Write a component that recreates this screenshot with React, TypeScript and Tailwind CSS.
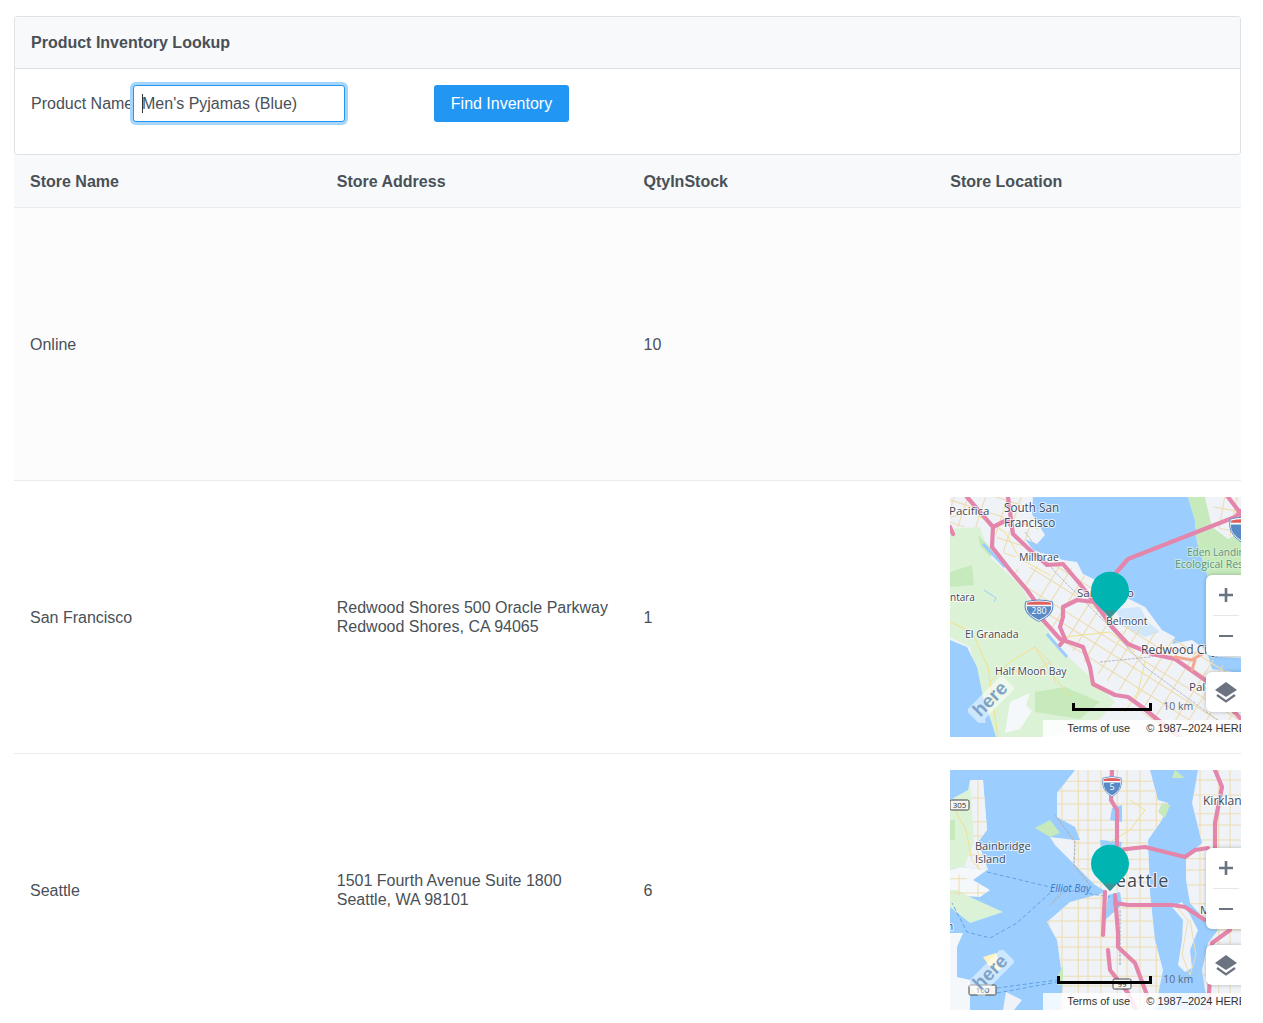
import React from 'react';

const WATER = '#9bceff';
const LAND = '#eff3f7';
const GREEN = '#dcf2d6';
const GREEN2 = '#c6eabc';
const TAN = '#eddcb2';
const YELLOW = '#f4e08a';
const PINK = '#e486ab';

function Label({ x, y, size = 11.5, fill = '#3f4856', italic = false, halo = '#ffffff', spacing = 0, children }: { x: number; y: number; size?: number; fill?: string; italic?: boolean; halo?: string; spacing?: number; children: React.ReactNode }) {
  return (
    <text x={x} y={y} fontSize={size} letterSpacing={spacing} fill={fill} fontStyle={italic ? 'italic' : 'normal'} stroke={halo} strokeWidth={2} strokeOpacity={0.7} paintOrder="stroke" className="font-['Open_Sans',sans-serif]">
      {children}
    </text>
  );
}

function Lines({ d, color, width }: { d: string[]; color: string; width: number }) {
  return (
    <g fill="none" stroke={color} strokeWidth={width} strokeLinejoin="round" strokeLinecap="round">
      {d.map((p) => (
        <path key={p} d={p} />
      ))}
    </g>
  );
}

// street grid, clipped to a land outline
function Grid({ id, area, step, angle = 0 }: { id: string; area: string; step: number; angle?: number }) {
  const lines: string[] = [];
  for (let i = 0; i * step < 700; i++) {
    const p = -200 + i * step + (i % 3 === 1 ? step * 0.25 : 0);
    lines.push(`M${p},-200 L${p},500`);
    lines.push(`M-200,${p} L600,${p}`);
  }
  return (
    <g clipPath={`url(#${id})`}>
      <clipPath id={id}>
        <path d={area} />
      </clipPath>
      <g transform={`rotate(${angle} 150 120)`} fill="none" stroke={TAN} strokeWidth="1.1">
        {lines.map((p) => (
          <path key={p} d={p} />
        ))}
      </g>
    </g>
  );
}

function Shield({ x, y, label, sx = 1, sy = 1 }: { x: number; y: number; label: string; sx?: number; sy?: number }) {
  return (
    <g transform={`translate(${x} ${y})`}>
      <g transform={`scale(${sx} ${sy})`}>
        <path d="M-9,-9 Q0,-12 9,-9 Q12,2 0,10 Q-12,2 -9,-9Z" fill="#ffffff" stroke="#5a8ac6" strokeWidth="0.8" />
        <path d="M-8,-8 Q0,-10 8,-8 L8.5,-6 L-8.5,-6Z" fill="#e0605e" />
        <path d="M-8.5,-4.5 L8.5,-4.5 Q9,3 0,8.5 Q-9,3 -8.5,-4.5Z" fill="#5a8ac6" />
      </g>
      <text y="3" textAnchor="middle" fontSize="9" fill="#ffffff" className="font-['Open_Sans',sans-serif]">{label}</text>
    </g>
  );
}

function RoadSign({ x, y, w, label }: { x: number; y: number; w: number; label: string }) {
  return (
    <g>
      <rect x={x} y={y} width={w} height={10} rx={1.5} fill="#f5f5f0" stroke="#444444" strokeWidth="1" />
      <text x={x + w / 2} y={y + 8} textAnchor="middle" fontSize="8" fill="#333333" className="font-['Open_Sans',sans-serif]">{label}</text>
    </g>
  );
}

function MapOverlay({ barX }: { barX: number }) {
  return (
    <>
      {/* here logo */}
      <svg className="absolute left-[18px] top-[180px]" width="46" height="46" viewBox="0 0 46 46">
        <g transform="rotate(-45 23 23)">
          <rect x="-2" y="13" width="50" height="19" rx="3" fill="#ffffff" fillOpacity="0.5" />
          <path d="M-2,32 L6,32 L-2,40Z" fill="#ffffff" fillOpacity="0.5" />
          <text x="23" y="28" textAnchor="middle" fontSize="19" fontWeight="700" fill="#7fa3c7" className="font-['Liberation_Sans',sans-serif]">here</text>
        </g>
      </svg>
      {/* scale */}
      <div className="absolute top-[206px] h-[8px] border-x-[3px] border-b-[3px] border-black" style={{ left: barX, width: 202 - barX }} />
      <span className="absolute left-[213px] top-[202px] text-[10.5px] leading-[14px] text-[#5b6b84] font-['Open_Sans',sans-serif]">10 km</span>
      {/* attribution */}
      <div className="absolute left-[93px] right-0 bottom-0 h-[17px] bg-white/85 flex items-center whitespace-nowrap overflow-hidden text-[11px] text-[#333333]">
        <span className="ml-[24px]">Terms of use</span>
        <span className="ml-[16px]">© 1987–2024 HERE</span>
      </div>
      {/* pin */}
      <svg className="absolute left-[140px] top-[74px]" width="40" height="48" viewBox="0 0 40 48">
        <path d="M20,47 L7,33.5 A19,19 0 1 1 33,33.5 Z" fill="#00b5b1" />
        <path d="M13,39.5 L27,39.5 L20,47Z" fill="#3a9397" />
      </svg>
      {/* zoom controls */}
      <div className="absolute left-[256px] top-[78px] w-[40px] h-[81px] bg-white rounded-l-md shadow-[0_0_4px_rgba(0,0,0,0.25)] flex flex-col items-center">
        <div className="h-[40px] flex items-center justify-center">
          <svg width="16" height="16" viewBox="0 0 16 16"><path d="M8,1V15M1,8H15" stroke="#6b7280" strokeWidth="2.6" /></svg>
        </div>
        <div className="w-[26px] h-px bg-[#e5e7eb]" />
        <div className="h-[40px] flex items-center justify-center">
          <svg width="16" height="16" viewBox="0 0 16 16"><path d="M1,8H15" stroke="#6b7280" strokeWidth="2" /></svg>
        </div>
      </div>
      {/* layers */}
      <div className="absolute left-[256px] top-[175px] w-[40px] h-[40px] bg-white rounded-l-md shadow-[0_0_4px_rgba(0,0,0,0.25)] flex items-center justify-center">
        <svg width="24" height="24" viewBox="0 0 24 24">
          <path d="M12,2 L23,10 L12,17 L1,10Z" fill="#6b7280" />
          <path d="M3,15 L12,21.5 L21,15" fill="none" stroke="#6b7280" strokeWidth="2.2" />
        </svg>
      </div>
    </>
  );
}

function SanFranciscoMap() {
  return (
    <div className="relative w-full h-[240px] overflow-hidden bg-[#eff3f7]">
      <svg className="absolute inset-0" width="291" height="240" viewBox="0 0 291 240">
        <rect width="291" height="240" fill={LAND} />
        <path d="M0,32 L30,30 L40,60 L70,88 L88,118 L108,150 L140,180 L165,205 L150,222 L95,240 L45,240 L30,190 L20,150 L0,140Z" fill={GREEN} />
        <path d="M0,75 L22,68 L24,88 L0,90Z M28,38 L45,55 L40,60 L30,48Z M85,195 L115,190 L150,205 L130,222 L85,215Z" fill={GREEN2} />
        <path d="M60,205 L80,196 L76,208 L82,214 L70,232 L55,236Z" fill="#f5f8fb" />
        <path d="M0,143 L17,150 L27,170 L33,200 L43,230 L46,240 L0,240Z" fill={WATER} />
        <path d="M83,0 L82,17 L95,38 L87,47 L75,42 L83,53 L113,63 L127,65 L133,77 L150,85 L175,100 L195,110 L212,133 L225,140 L222,147 L242,143 L256,153 L268,160 L291,161 L291,176 L262,172 L256,150 L258,80 L247,45 L245,23 L238,0Z" fill={WATER} />
        <path d="M238,0 L245,23 L247,45 L258,80 L291,80 L291,42 L262,30 L255,0Z" fill={GREEN2} />
        <path d="M255,0 L262,30 L278,42 L291,35 L291,0Z" fill={LAND} />
        <path d="M165,112 L190,110 L198,125 L210,135 L195,140 L175,130Z" fill="#cfe6fb" />
        <path d="M33,47 L55,70 M97,137 L117,160" fill="none" stroke={WATER} strokeWidth="3" />
        <path d="M34,93 L46,101 L44,105" fill="none" stroke={WATER} strokeWidth="1" />
        <Grid id="sf-east" step={15} angle={32} area="M60,73 L113,66 L150,88 L175,115 L212,137 L256,158 L291,180 L291,240 L215,240 L178,200 L140,170 L110,142 L87,107Z" />
        <Grid id="sf-north" step={17} angle={18} area="M0,0 L81,0 L80,17 L92,38 L75,44 L60,70 L42,30 L0,30Z" />
        <Grid id="sf-bay" step={16} angle={10} area="M262,0 L265,28 L280,40 L291,35 L291,0Z" />
        <Lines
          color={TAN}
          width={1}
          d={['M85,150 L100,165 L105,185 M100,165 L75,180 L60,170', 'M20,0 L30,20 M0,20 L30,15']}
        />
        <Lines
          color={YELLOW}
          width={1}
          d={['M0,125 L22,135 L38,170 L40,185 L60,165 L85,150 L100,175 L120,200', 'M40,185 L48,240', 'M195,165 L188,195 L175,215', 'M115,140 L160,135 L185,155', 'M30,20 L55,35 L70,62 L100,78']}
        />
        <path d="M75,35 L105,75 L155,125 L195,170 L291,240 M150,165 L200,160 L240,150" fill="none" stroke="#b9bcc0" strokeWidth="1" strokeDasharray="3 1" />
        <Lines
          color={PINK}
          width={4.2}
          d={[
            'M17,0 L43,30 L42,50 L60,73 L77,93 L87,107 L93,123 L110,142 L133,150 L140,170 L143,187 L153,192 L165,198 L178,200 L192,210 L208,223 L232,242',
            'M43,30 L57,23 L62,30 L63,37 L82,55 L97,68 L113,67 L130,87 L150,113 L162,130 L178,147 L202,157 L225,162 L255,183 L291,222',
            'M165,77 L178,62 L285,20 L291,14 M278,0 L288,13 L291,20',
            'M145,105 L127,103 L113,110 L113,120 L110,130 L115,142 L110,148',
            'M0,30 L3,37',
            'M58,0 L62,30',
          ]}
        />
        <Lines color="#f3a98f" width={3} d={['M225,160 L242,163 L252,157', 'M245,163 L242,173']} />
        <Shield x={89} y={114} label="280" sx={1.45} sy={1.05} />
        <Shield x={291} y={33} label="" sx={1.2} sy={1.2} />
        <Label x={-1} y={18}>Pacifica</Label>
        <Label x={54} y={15} size={11.7}>South San</Label>
        <Label x={54} y={30} size={11.7}>Francisco</Label>
        <Label x={69} y={64} size={10.5}>Millbrae</Label>
        <Label x={0} y={104} size={10}>ntara</Label>
        <Label x={127} y={100} size={11.5}>San Mateo</Label>
        <Label x={156} y={128} size={10.5}>Belmont</Label>
        <Label x={15} y={141} size={10.5}>El Granada</Label>
        <Label x={45} y={178} size={10.5}>Half Moon Bay</Label>
        <Label x={191} y={157} size={12}>Redwood City</Label>
        <Label x={239} y={194}>Palo Alto</Label>
        <Label x={237} y={59} size={10} fill="#5d9280" halo="#d8f0d2">Eden Landing</Label>
        <Label x={225} y={71} size={10.5} fill="#5d9280" halo="#d8f0d2">Ecological Reserve</Label>
      </svg>
      <MapOverlay barX={122} />
    </div>
  );
}

const SEATTLE_LAND =
  'M125,0 L107,23 L107,47 L125,57 L130,70 L123,70 L123,93 L145,115 L157,122 L120,132 L97,152 L107,170 L113,213 L110,240 L205,240 L213,200 L205,170 L200,122 L198,70 L212,50 L218,33 L208,30 L200,0Z';
const SEATTLE_EAST = 'M248,0 L245,17 L242,33 L252,73 L236,87 L236,110 L240,133 L255,150 L268,160 L258,173 L252,200 L255,220 L262,240 L291,240 L291,0Z';
const MERCER = 'M222,137 L232,132 L240,145 L248,160 L240,180 L242,198 L235,202 L228,195 L232,170 L233,150Z';

function SeattleMap() {
  return (
    <div className="relative w-full h-[240px] overflow-hidden bg-[#9bceff]">
      <svg className="absolute inset-0" width="291" height="240" viewBox="0 0 291 240">
        <rect width="291" height="240" fill={WATER} />
        <path d="M0,30 L18,20 L20,10 L33,10 L37,60 L28,72 L38,100 L10,97 L0,100Z" fill={GREEN} />
        <path d="M20,10 L33,10 L37,60 L28,72 L38,100 L14,97 L24,72Z" fill={LAND} />
        <path d="M10,97 L37,100 L23,110 L40,120 L30,127 L0,125 L0,100Z" fill="#f5f8fb" />
        <path d="M7,120 L20,127 L53,142 L20,153 L0,137 L0,120Z" fill={GREEN} />
        <path d="M0,163 L13,163 L7,177 L7,207 L20,210 L20,240 L0,240Z" fill="#f5f8fb" />
        <path d="M56,222 L72,230 L64,240 L53,240Z" fill={LAND} />
        <path d="M33,187 L46,183 L52,198 L44,203Z" fill="#fdf3c0" />
        <path d={SEATTLE_LAND} fill={LAND} />
        <path d="M85,58 L100,50 L110,63 L100,67Z" fill={GREEN2} />
        <path d="M100,67 L125,70 L123,93 L105,75Z" fill={LAND} />
        <path d={SEATTLE_EAST} fill={LAND} />
        <path d={MERCER} fill={LAND} />
        <Grid id="sea-main" step={13} area={SEATTLE_LAND} />
        <Grid id="sea-east" step={15} area={SEATTLE_EAST} />
        <Grid id="sea-kitsap" step={19} area="M20,10 L33,10 L37,60 L28,72 L38,100 L14,97 L24,72Z M0,100 L40,120 L30,127 L0,125Z" />
        <path d="M162,38 L172,35 L172,52 L160,50Z M150,70 L172,72 L170,82 L152,85Z M158,125 L170,122 L172,135 L155,150Z" fill={WATER} />
        <path d="M212,33 L220,35 L215,48 L208,42Z M0,50 L5,50 L5,70 L0,70Z M225,0 L235,8 L222,8Z M108,205 L113,195 L113,215 L107,215Z" fill={GREEN2} />
        <Lines color={TAN} width={1} d={['M225,135 L238,150 L232,185 L240,205 L246,185 L240,150']} />
        <Lines color={YELLOW} width={1} d={['M5,40 L16,60 L22,90 L30,100', 'M180,30 L195,40 L180,60 L160,72', 'M165,125 L165,140']} />
        <path d="M105,45 L125,72 L124,95 L140,115 M170,140 L170,195 M115,120 L100,135" fill="none" stroke="#b0b3b8" strokeWidth="1.2" strokeDasharray="3 1" />
        <path d="M37,102 L100,117 L160,127 M100,123 L67,153 L40,168 L17,162 L2,133 M47,218 L107,210 M47,223 L107,212" fill="none" stroke="#5b9be0" strokeWidth="0.9" strokeDasharray="4 2.5" />
        <Lines
          color={PINK}
          width={4.2}
          d={[
            'M162,0 L161,30 L167,40 L167,80 L160,118',
            'M155,122 L153,165 M165,125 L168,163 L168,177 L185,193 L197,225',
            'M168,80 L195,77 L235,87 L245,80 L258,78',
            'M265,0 L272,17 L265,53 L265,80',
            'M165,133 L178,135 L222,135 L235,137 L255,150',
            'M158,180 L160,200 L178,223 L186,240',
            'M280,160 L262,173 L258,240',
          ]}
        />
        <Shield x={162} y={17} label="5" />
        <RoadSign x={0} y={30} w={19} label="305" />
        <RoadSign x={19} y={215} w={27} label="160" />
        <RoadSign x={163} y={209} w={18} label="99" />
        <Label x={25} y={80} size={11}>Bainbridge</Label>
        <Label x={25} y={93} size={11}>Island</Label>
        <Label x={253} y={35} size={12}>Kirkland</Label>
        <Label x={155} y={117} size={18} spacing={1}>Seattle</Label>
        <Label x={100} y={122} size={10} fill="#3f75c0" italic halo={WATER}>Elliot Bay</Label>
        <Label x={-3} y={160} size={10}>n</Label>
        <Label x={250} y={144}>Medina</Label>
      </svg>
      <MapOverlay barX={107} />
    </div>
  );
}

const rows = [
  { name: 'Online', address: null, qty: 10, map: null },
  { name: 'San Francisco', address: ['Redwood Shores 500 Oracle Parkway', 'Redwood Shores, CA 94065'], qty: 1, map: <SanFranciscoMap /> },
  { name: 'Seattle', address: ['1501 Fourth Avenue Suite 1800', 'Seattle, WA 98101'], qty: 6, map: <SeattleMap /> },
];

export default function App() {
  return (
    <div className="bg-white pl-[14px] pr-[22px] pt-4 text-base text-[#495057] font-['Liberation_Sans',sans-serif]">
      <div className="border border-[#dee2e6] rounded-[3px] overflow-hidden">
        <div className="h-[52px] bg-[#f8f9fa] border-b border-[#dee2e6] px-4 flex items-center font-bold">
          Product Inventory Lookup
        </div>
        <form className="p-4 h-[85px] flex items-start" onSubmit={(e) => e.preventDefault()}>
          <label className="w-[102px] h-[37px] flex items-center whitespace-nowrap">Product Name</label>
          <div className="relative">
            <input
              autoFocus
              defaultValue="Men's Pyjamas (Blue)"
              className="block w-[212px] h-[37px] px-2 bg-white border border-[#2196f3] rounded-[3px] outline-none shadow-[0_0_0_3px_#a6d5fa] caret-transparent"
            />
            {/* text caret */}
            <span className="absolute left-[9px] top-[9px] w-px h-[19px] bg-[#333333]" />
          </div>
          <button type="submit" className="ml-[89px] w-[135px] h-[37px] bg-[#2196f3] text-white rounded-[3px]">
            Find Inventory
          </button>
        </form>
      </div>
      <table className="w-full table-fixed border-collapse text-left">
        <thead>
          <tr className="h-[52px] bg-[#f8f9fa] border-b border-[#e9ecef]">
            <th className="px-4 pt-[2px] font-bold">Store Name</th>
            <th className="px-4 pt-[2px] font-bold">Store Address</th>
            <th className="px-4 pt-[2px] font-bold">QtyInStock</th>
            <th className="px-4 pt-[2px] font-bold">Store Location</th>
          </tr>
        </thead>
        <tbody>
          {rows.map((r, i) => (
            <tr key={r.name} className={`h-[273px] border-b border-[#e9ecef] ${i === 0 ? 'bg-[#fcfcfc]' : 'bg-white'}`}>
              <td className="px-4 pt-[2px]">{r.name}</td>
              <td className="px-4 pt-px leading-[19px]">
                {r.address?.map((line) => (
                  <div key={line}>{line}</div>
                ))}
              </td>
              <td className="px-4 pt-[2px]">{r.qty}</td>
              <td className="py-4 pl-4 pr-0">{r.map}</td>
            </tr>
          ))}
        </tbody>
      </table>
    </div>
  );
}
